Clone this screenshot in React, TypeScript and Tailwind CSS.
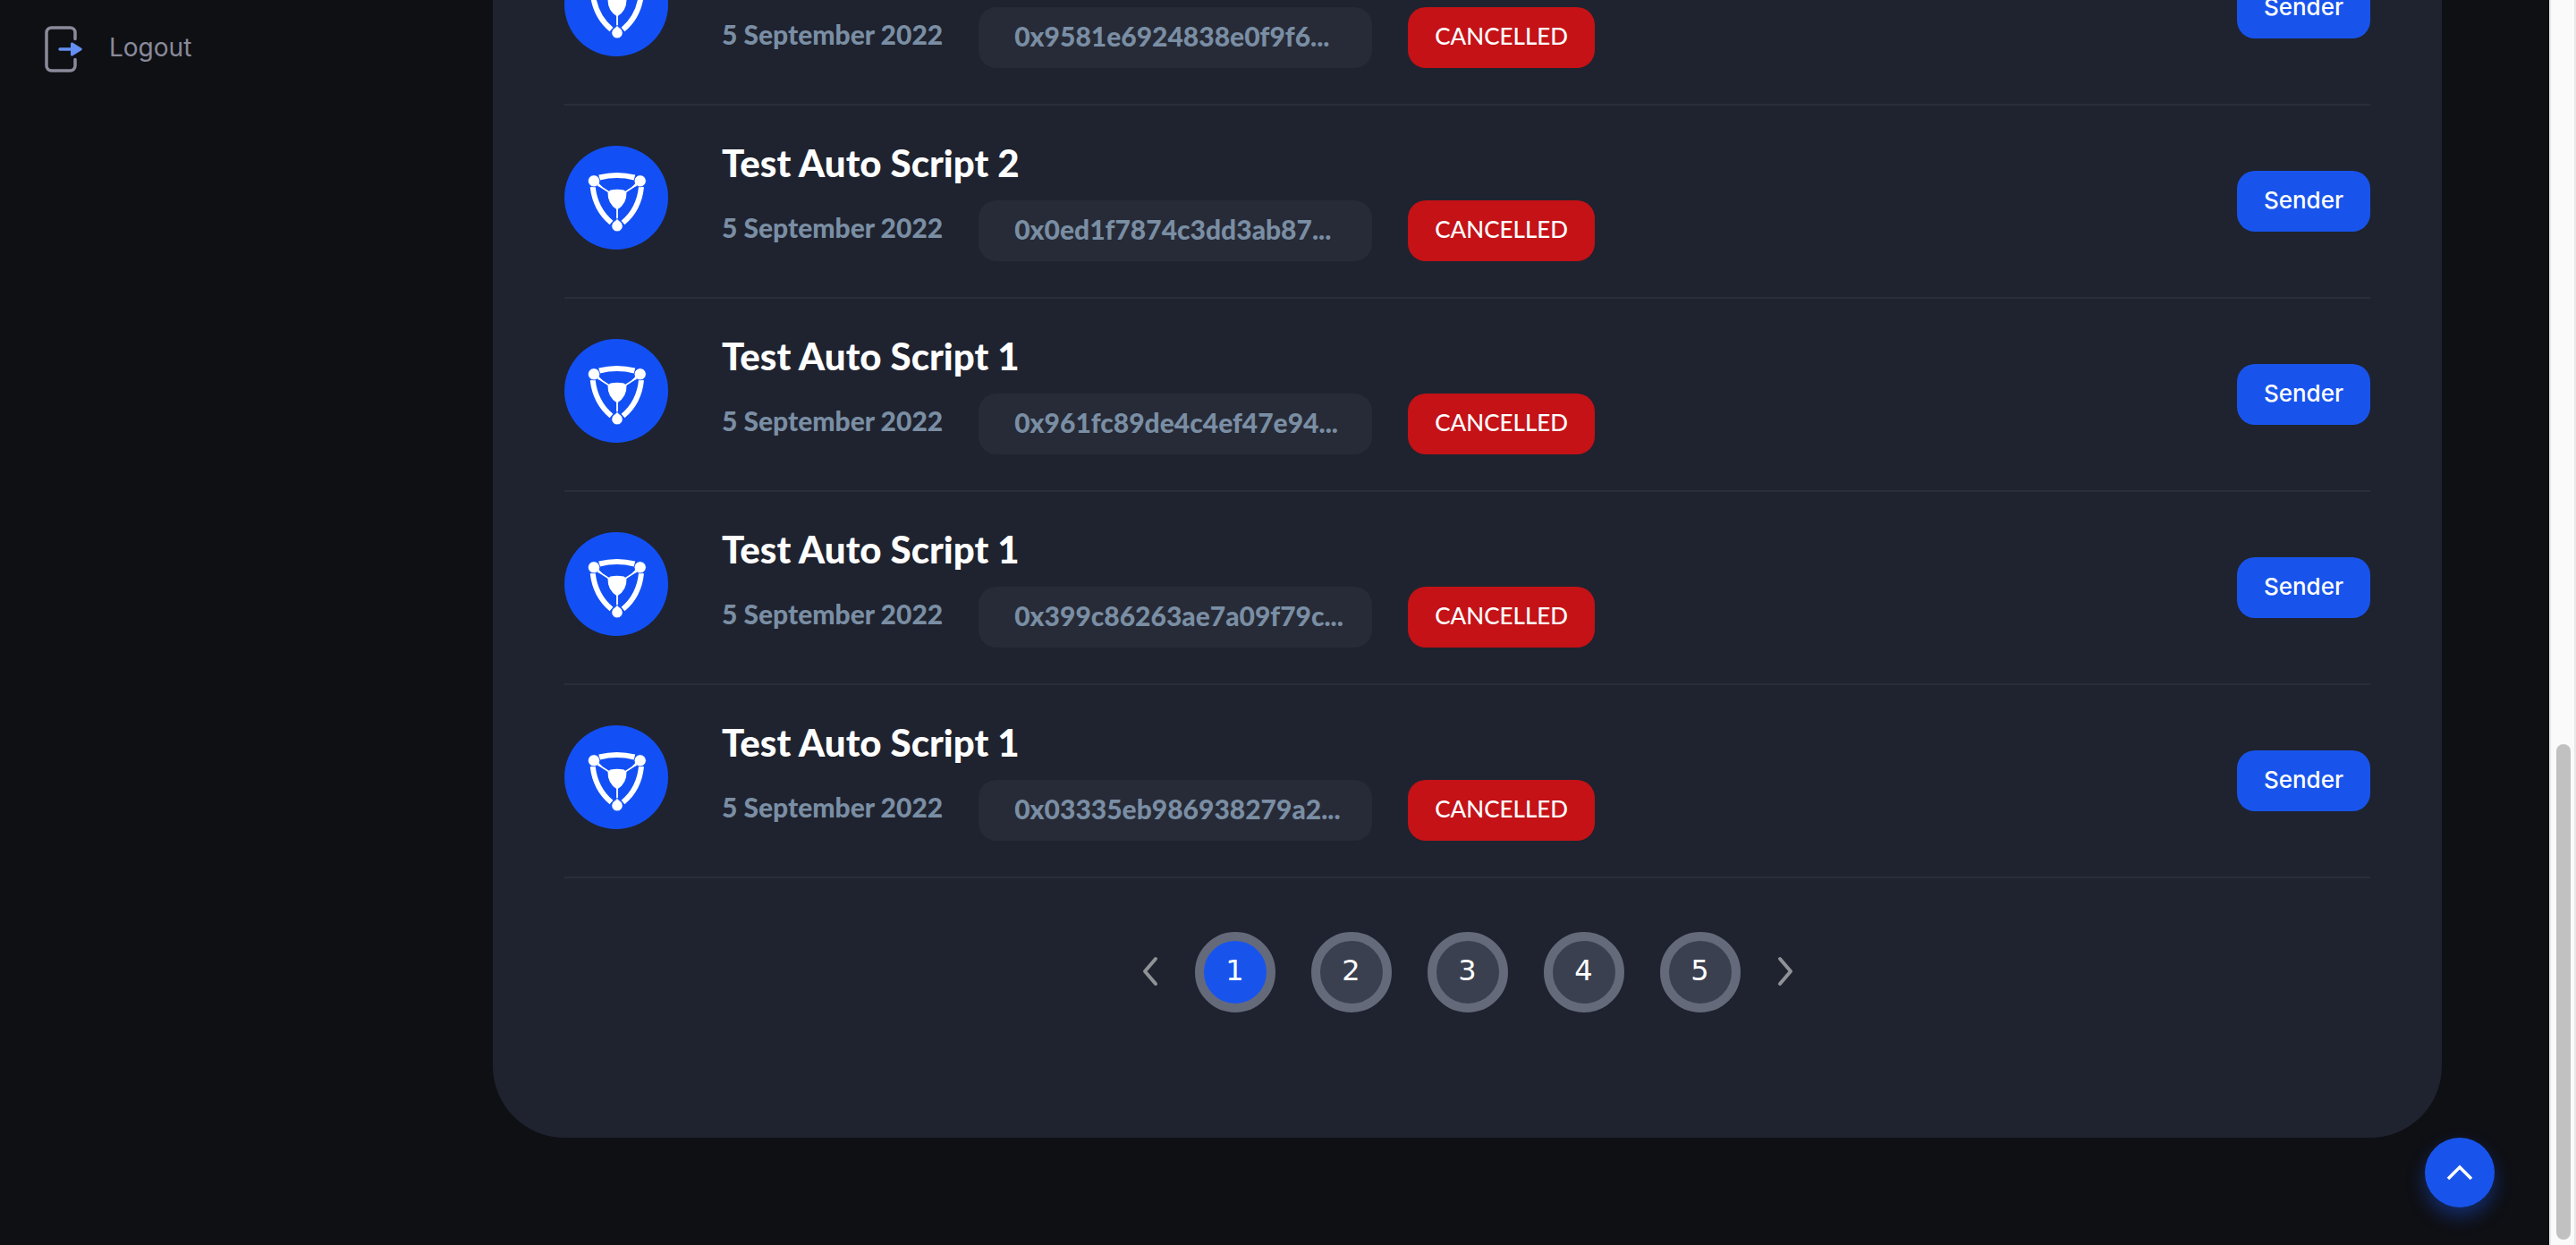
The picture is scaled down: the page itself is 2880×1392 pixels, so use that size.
import React from "react";

type Script = { title: string; date: string; hash: string; status: string };

const scripts: Script[] = [
  { title: "Test Auto Script 2", date: "5 September 2022", hash: "0x9581e6924838e0f9f6...", status: "CANCELLED" },
  { title: "Test Auto Script 2", date: "5 September 2022", hash: "0x0ed1f7874c3dd3ab87...", status: "CANCELLED" },
  { title: "Test Auto Script 1", date: "5 September 2022", hash: "0x961fc89de4c4ef47e94...", status: "CANCELLED" },
  { title: "Test Auto Script 1", date: "5 September 2022", hash: "0x399c86263ae7a09f79c...", status: "CANCELLED" },
  { title: "Test Auto Script 1", date: "5 September 2022", hash: "0x03335eb986938279a2...", status: "CANCELLED" },
];

const pages = [1, 2, 3, 4, 5];

function LogoutIcon() {
  return (
    <svg className="h-[54px] w-11" viewBox="0 0 44 54" fill="none" aria-hidden="true">
      <path d="M34 15.500V8.500a5.500 5.500 0 0 0-5.500-5.500H7.500A5.500 5.500 0 0 0 2 8.500v37A5.500 5.500 0 0 0 7.500 51h21a5.500 5.500 0 0 0 5.500-5.500v-7" stroke="#8a8a9a" strokeWidth="3.500" strokeLinecap="round" />
      <path d="M17 27h15" stroke="#6390f2" strokeWidth="3.500" strokeLinecap="round" />
      <path d="M29 21v12c0 1.500 1.300 2 2.400 1.200l9.600-6c1-.7 1-1.700 0-2.400l-9.600-6c-1.100-.8-2.400-.3-2.400 1.200z" fill="#6390f2" />
    </svg>
  );
}

function ShieldLogo() {
  return (
    <svg className="mb-2 size-[116px] shrink-0" viewBox="0 0 116 116" aria-hidden="true">
      <circle cx="58" cy="58" r="58" fill="#1250f6" />
      <g fill="none" stroke="#fff">
        <path d="M39 35.500Q58.800 30.500 78.500 35.500" strokeWidth="6" />
        <path d="M31.700 46Q34.500 71 52.500 86" strokeWidth="6" />
        <path d="M86 46Q83.500 71 65.500 86" strokeWidth="6" />
        <path d="M37 43.500L51 52.500M81 43.500L67 52.500" strokeWidth="1.500" />
        <path d="M59 70V86" strokeWidth="1.800" />
      </g>
      <g fill="#fff" stroke="#1250f6" strokeWidth="0.800">
        <circle cx="33" cy="39.300" r="6.600" />
        <circle cx="84.700" cy="39.300" r="6.600" />
        <path d="M59 81Q60 83.500 63 85A6.200 6.200 0 1 1 55 85Q58 83.500 59 81z" />
      </g>
      <g fill="#fff">
        <path d="M38 41.500L43 46.500L37 45z" />
        <path d="M80 41.500L75 46.500L81 45z" />
        <path d="M48.500 51.500Q50 51 51.500 49.600Q59 47.800 66.500 49.600Q68 51 69.500 51.500Q70 65 59 71.500Q48 65 48.500 51.500z" />
      </g>
    </svg>
  );
}

function ScriptRow({ script }: { script: Script }) {
  return (
    <li className="flex items-center justify-between border-b-2 border-[#2a2e3a] py-10">
      <div className="flex items-center gap-[60px]">
        <ShieldLogo />
        <div>
          <h2 className="mb-[18px] text-[42px] leading-[48px] font-black text-white">{script.title}</h2>
          <div className="flex gap-10 text-[30px] font-black text-[#7a8ea4]">
            <time className="pt-2.5 leading-10">{script.date}</time>
            <span className="w-[440px] rounded-[20px] bg-[#272b37] px-10 py-3 leading-10">{script.hash}</span>
            <span className="h-[68px] rounded-[20px] bg-[#c41217] px-[30px] py-3 text-[26px] leading-10 font-medium text-white">{script.status}</span>
          </div>
        </div>
      </div>
      <button className="h-[68px] rounded-[20px] bg-[#1854ec] px-[30px] pb-1 font-[Inter,sans-serif] text-[26px] font-medium text-white">Sender</button>
    </li>
  );
}

function Chevron({ d, label }: { d: string; label: string }) {
  return (
    <button aria-label={label} className="h-10 w-5">
      <svg className="h-10 w-5" viewBox="0 0 20 40" fill="none" stroke="#8f9297" strokeWidth="4" strokeLinecap="round" strokeLinejoin="round" aria-hidden="true">
        <path d={d} />
      </svg>
    </button>
  );
}

export default function App() {
  return (
    <div className="relative flex h-screen overflow-hidden bg-[#0f1014] font-[Lato,sans-serif]">
      <aside className="w-[551px] shrink-0 pt-7 pl-[50px]">
        <a href="#logout" className="flex w-fit items-center gap-7 font-[Inter,sans-serif] text-[28px] text-[#8a8a9a]">
          <LogoutIcon />
          <span className="pb-1 leading-[50px]">Logout</span>
        </a>
      </aside>

      <main className="flex min-w-0 flex-1 flex-col justify-end pr-[120px] pb-[120px]">
        <section className="rounded-b-[80px] bg-[#1f232f] px-20 pb-[140px]">
          <ul>
            {scripts.map((s) => (
              <ScriptRow key={s.hash} script={s} />
            ))}
          </ul>
          <nav aria-label="Pagination" className="mt-[60px] flex items-center justify-center gap-10">
            <Chevron label="Previous page" d="M16 5L4 19L16 33" />
            {pages.map((p) => (
              <button
                key={p}
                aria-current={p === 1 ? "page" : undefined}
                className={`size-[90px] rounded-full border-10 border-[#656a7b] pb-1 font-['DejaVu_Sans',sans-serif] text-[32px] text-white ${p === 1 ? "bg-[#1854ec]" : "bg-[#3b4050]"}`}
              >
                {p}
              </button>
            ))}
            <Chevron label="Next page" d="M4 5L16 19L4 33" />
          </nav>
        </section>
      </main>

      <button
        aria-label="Back to top"
        className="absolute right-[91px] bottom-[42px] flex size-[78px] items-center justify-center rounded-full bg-[#1854ec] shadow-[0_10px_20px_rgba(24,84,236,0.4)]"
      >
        <svg className="h-5 w-8" viewBox="0 0 32 20" fill="none" stroke="#fff" strokeWidth="3.500" aria-hidden="true">
          <path d="M3 17L16 4L29 17" />
        </svg>
      </button>

      <div className="flex w-[30px] shrink-0 flex-col justify-end border-x-2 border-[#e8e8e8] bg-[#fafafa] px-1.5 pb-1.5">
        <div className="h-[40%] w-4 rounded-full bg-[#c1c1c1]" />
      </div>
    </div>
  );
}
